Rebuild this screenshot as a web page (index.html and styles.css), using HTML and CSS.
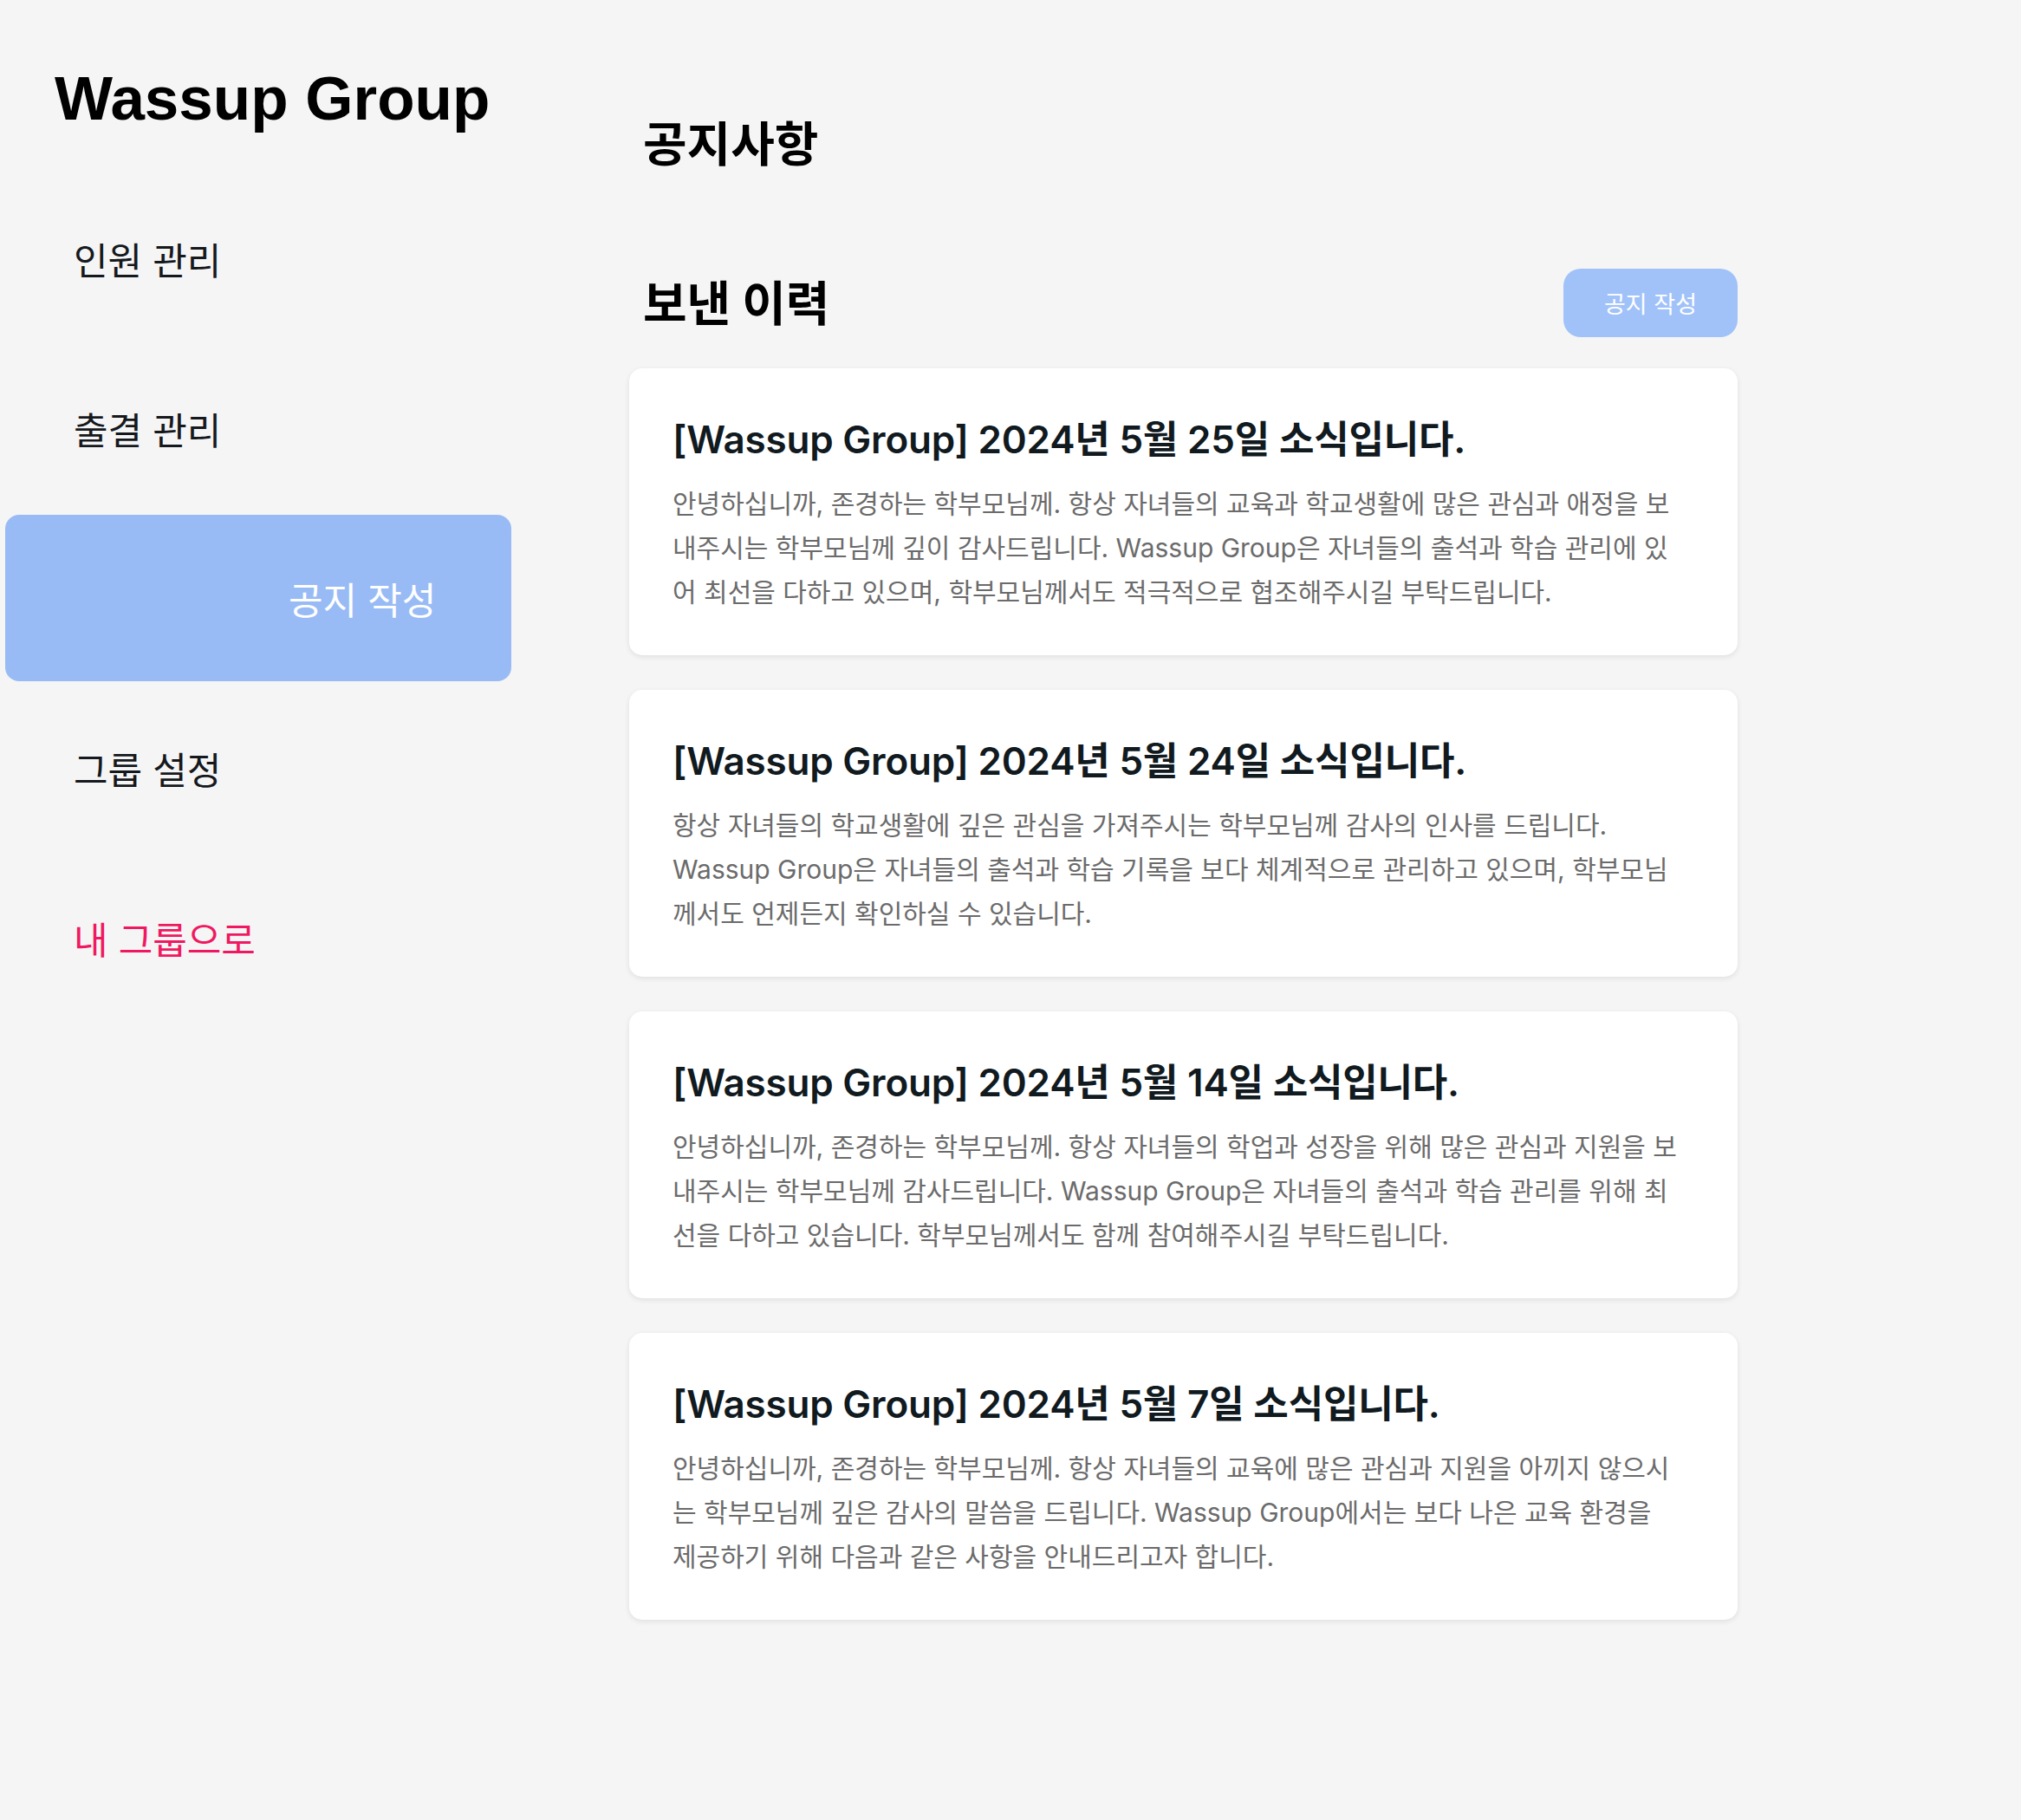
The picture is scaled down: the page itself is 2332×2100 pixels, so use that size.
FILE: index.html
```html
<!DOCTYPE html>
<html lang="ko">
<head>
<meta charset="utf-8">
<title>Wassup Group - 공지사항</title>
<link rel="stylesheet" href="styles.css">
</head>
<body>
<div class="layout">
  <aside class="sidebar">
    <h1 class="brand">Wassup Group</h1>
    <nav class="nav">
      <a class="nav-item">인원 관리</a>
      <a class="nav-item">출결 관리</a>
      <a class="nav-item active">공지 작성</a>
      <a class="nav-item">그룹 설정</a>
      <a class="nav-item back">내 그룹으로</a>
    </nav>
  </aside>
  <main class="main">
    <h2 class="page-title">공지사항</h2>
    <div class="section-head">
      <h3 class="section-title">보낸 이력</h3>
      <button class="write-btn">공지 작성</button>
    </div>
    <div class="cards">
      <article class="card">
        <h4 class="card-title">[Wassup Group] 2024년 5월 25일 소식입니다.</h4>
        <p class="card-body">안녕하십니까, 존경하는 학부모님께. 항상 자녀들의 교육과 학교생활에 많은 관심과 애정을 보<br>내주시는 학부모님께 깊이 감사드립니다. Wassup Group은 자녀들의 출석과 학습 관리에 있<br>어 최선을 다하고 있으며, 학부모님께서도 적극적으로 협조해주시길 부탁드립니다.</p>
      </article>
      <article class="card">
        <h4 class="card-title">[Wassup Group] 2024년 5월 24일 소식입니다.</h4>
        <p class="card-body">항상 자녀들의 학교생활에 깊은 관심을 가져주시는 학부모님께 감사의 인사를 드립니다.<br>Wassup Group은 자녀들의 출석과 학습 기록을 보다 체계적으로 관리하고 있으며, 학부모님<br>께서도 언제든지 확인하실 수 있습니다.</p>
      </article>
      <article class="card">
        <h4 class="card-title">[Wassup Group] 2024년 5월 14일 소식입니다.</h4>
        <p class="card-body">안녕하십니까, 존경하는 학부모님께. 항상 자녀들의 학업과 성장을 위해 많은 관심과 지원을 보<br>내주시는 학부모님께 감사드립니다. Wassup Group은 자녀들의 출석과 학습 관리를 위해 최<br>선을 다하고 있습니다. 학부모님께서도 함께 참여해주시길 부탁드립니다.</p>
      </article>
      <article class="card">
        <h4 class="card-title">[Wassup Group] 2024년 5월 7일 소식입니다.</h4>
        <p class="card-body">안녕하십니까, 존경하는 학부모님께. 항상 자녀들의 교육에 많은 관심과 지원을 아끼지 않으시<br>는 학부모님께 깊은 감사의 말씀을 드립니다. Wassup Group에서는 보다 나은 교육 환경을<br>제공하기 위해 다음과 같은 사항을 안내드리고자 합니다.</p>
      </article>
    </div>
  </main>
</div>
</body>
</html>
```

FILE: styles.css
```css
* { box-sizing: border-box; }

html, body {
  margin: 0;
  padding: 0;
  background: #f5f5f5;
}

body {
  font-family: Inter, "Noto Sans CJK KR", "Noto Sans", sans-serif;
  color: #15191d;
  min-height: 2100px;
}

.layout {
  display: flex;
  align-items: flex-start;
}

.sidebar {
  width: 590px;
  flex: none;
  padding: 74px 0 0 6px;
}

.brand {
  margin: 0 0 48px 57px;
  font-family: "Liberation Sans", Arial, sans-serif;
  font-weight: 700;
  font-size: 71px;
  line-height: 80px;
  color: #000;
}

.nav {
  display: flex;
  flex-direction: column;
  gap: 4px;
}

.nav-item {
  display: flex;
  align-items: center;
  height: 192px;
  width: 584px;
  padding-left: 79px;
  font-size: 43px;
  font-weight: 400;
  color: #15191d;
  border-radius: 16px;
  text-decoration: none;
}

.nav-item.active {
  background: #99bbf5;
  color: #ffffff;
  padding-left: 327px;
}

.nav-item.back {
  color: #f01860;
}

.main {
  width: 1415px;
  padding: 134px 0 0 136px;
  flex: none;
}

.page-title {
  margin: 0 0 116px 0;
  padding-left: 16px;
  font-size: 55px;
  line-height: 64px;
  font-weight: 700;
  color: #000;
}

.section-head {
  display: flex;
  align-items: center;
  justify-content: space-between;
  height: 79px;
  margin-top: -4px;
  margin-bottom: 36px;
}

.section-title {
  margin: 0;
  padding-left: 16px;
  font-size: 55px;
  line-height: 64px;
  font-weight: 700;
  color: #000;
}

.write-btn {
  width: 201px;
  height: 79px;
  border: none;
  border-radius: 20px;
  background: #a0c2f9;
  color: #ffffff;
  font-family: inherit;
  font-size: 27px;
  font-weight: 400;
  padding: 0;
}

.cards {
  display: flex;
  flex-direction: column;
  gap: 40px;
}

.card {
  height: 331px;
  background: #ffffff;
  border-radius: 15px;
  padding: 55px 40px 0 50px;
  box-shadow: 0 2px 6px rgba(0, 0, 0, 0.09);
}

.card-title {
  margin: 0;
  font-size: 44px;
  line-height: 54px;
  font-weight: 600;
  color: #111a1f;
  letter-spacing: -0.2px;
  white-space: nowrap;
}

.card-body {
  margin: 22px 0 0 0;
  font-size: 30px;
  line-height: 51px;
  color: #6b6b6b;
  white-space: nowrap;
}
```
